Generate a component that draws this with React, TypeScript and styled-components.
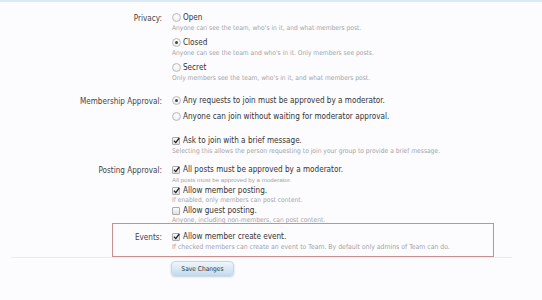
import React from "react";
import styled, { createGlobalStyle } from "styled-components";

const Global = createGlobalStyle`
  html, body { margin: 0; padding: 0; background: #fcfcfe; }
  body { font-family: "DejaVu Sans Condensed", "DejaVu Sans", sans-serif; color: #333; }
`;

const Page = styled.div`
  width: 542px;
  height: 300px;
  box-sizing: border-box;
  border-top: 2px solid #dde9f7;
  background: #fcfcfe;
  overflow: hidden;
  padding-top: 10px;
`;

const Row = styled.div<{ $highlight?: boolean; $gap?: number }>`
  display: flex;
  align-items: flex-start;
  margin-bottom: ${(p) => p.$gap ?? 0}px;
  ${(p) =>
    p.$highlight
      ? `margin-left: 112px; width: 380px; border: 1px solid #c99090; padding: 7px 0 4px; margin-top: -1px;`
      : ``}
`;

const Label = styled.div<{ $w?: number }>`
  width: ${(p) => p.$w ?? 162}px;
  flex: none;
  text-align: right;
  font-size: 8.1px;
  line-height: 11px;
  color: #444;
  padding-top: 1px;
`;

const Controls = styled.div`
  margin-left: 10px;
  display: flex;
  flex-direction: column;
`;

const Option = styled.div<{ $gap?: number }>`
  display: flex;
  flex-direction: column;
  margin-bottom: ${(p) => p.$gap ?? 0}px;
`;

const OptionLine = styled.label`
  display: flex;
  align-items: center;
  gap: 2px;
  font-size: 8.1px;
  line-height: 11px;
  height: 11px;
  color: #333;
`;

const Desc = styled.div<{ $small?: boolean; $lh?: number; $size?: number }>`
  font-size: ${(p) => p.$size ?? (p.$small ? 6.2 : 6.65)}px;
  line-height: ${(p) => p.$lh ?? 10}px;
  color: #a3a3a8;
  font-family: ${(p) => (p.$small ? `"Liberation Sans", sans-serif` : `"DejaVu Sans Condensed", "DejaVu Sans", sans-serif`)};
`;

const Radio = styled.span<{ $on?: boolean }>`
  width: 9px;
  height: 9px;
  box-sizing: border-box;
  border-radius: 50%;
  border: 1px solid #bdbdc0;
  background: radial-gradient(circle at 50% 40%, #fff 0%, #e6e6e8 100%);
  display: inline-flex;
  align-items: center;
  justify-content: center;
  flex: none;
  &::after {
    content: "";
    width: 3px;
    height: 3px;
    border-radius: 50%;
    background: ${(p) => (p.$on ? "#444" : "transparent")};
  }
`;

const Box = styled.span`
  width: 8px;
  height: 8px;
  box-sizing: border-box;
  border: 1px solid #ababaf;
  border-radius: 1px;
  background: linear-gradient(#fafafa, #e0e0e2);
  display: inline-flex;
  align-items: center;
  justify-content: center;
  flex: none;
  position: relative;
  margin-right: 1px;
`;

const Check: React.FC<{ on?: boolean }> = ({ on }) => (
  <Box>
    {on && (
      <svg width="7" height="7" viewBox="0 0 7 7" style={{ position: "absolute", left: 0, top: -1 }}>
        <path d="M1 3.8 L2.8 5.6 L6.2 1" stroke="#222" strokeWidth="1.3" fill="none" />
      </svg>
    )}
  </Box>
);

const Footer = styled.div`
  margin: 0 30px 0 11px;
  border-top: 1px solid #ececf0;
  padding: 3px 0 0 160px;
`;

const Button = styled.button`
  display: block;
  width: 63px;
  height: 15px;
  padding: 0;
  border: 1px solid #c3d6e8;
  border-radius: 4px;
  background: linear-gradient(#f0f6fc, #c4dcf0);
  box-shadow: 0 1px 2px rgba(120, 150, 180, 0.45);
  font-family: "DejaVu Sans Condensed", "DejaVu Sans", sans-serif;
  font-size: 6.6px;
  color: #333;
  line-height: 12px;
`;

export default function App() {
  return (
    <>
      <Global />
      <Page>
        <Row $gap={12}>
          <Label>Privacy:</Label>
          <Controls>
            <Option $gap={4}>
              <OptionLine><Radio />Open</OptionLine>
              <Desc>Anyone can see the team, who's in it, and what members post.</Desc>
            </Option>
            <Option $gap={4}>
              <OptionLine><Radio $on />Closed</OptionLine>
              <Desc>Anyone can see the team and who's in it. Only members see posts.</Desc>
            </Option>
            <Option>
              <OptionLine><Radio />Secret</OptionLine>
              <Desc>Only members see the team, who's in it, and what members post.</Desc>
            </Option>
          </Controls>
        </Row>
        <Row $gap={8}>
          <Label>Membership Approval:</Label>
          <Controls>
            <Option $gap={5}>
              <OptionLine><Radio $on />Any requests to join must be approved by a moderator.</OptionLine>
            </Option>
            <Option $gap={13}>
              <OptionLine><Radio />Anyone can join without waiting for moderator approval.</OptionLine>
            </Option>
            <Option>
              <OptionLine><Check on />Ask to join with a brief message.</OptionLine>
              <Desc>Selecting this allows the person requesting to join your group to provide a brief message.</Desc>
            </Option>
          </Controls>
        </Row>
        <Row>
          <Label>Posting Approval:</Label>
          <Controls>
            <Option>
              <OptionLine><Check on />All posts must be approved by a moderator.</OptionLine>
              <Desc $small>All posts must be approved by a moderator.</Desc>
            </Option>
            <Option>
              <OptionLine><Check on />Allow member posting.</OptionLine>
              <Desc $lh={9}>If enabled, only members can post content.</Desc>
            </Option>
            <Option>
              <OptionLine><Check />Allow guest posting.</OptionLine>
              <Desc $lh={8}>Anyone, including non-members, can post content.</Desc>
            </Option>
          </Controls>
        </Row>
        <Row $highlight>
          <Label $w={49}>Events:</Label>
          <Controls>
            <Option>
              <OptionLine><Check on />Allow member create event.</OptionLine>
              <Desc $size={6.85}>If checked members can create an event to Team. By default only admins of Team can do.</Desc>
            </Option>
          </Controls>
        </Row>
        <Footer>
          <Button>Save Changes</Button>
        </Footer>
      </Page>
    </>
  );
}
